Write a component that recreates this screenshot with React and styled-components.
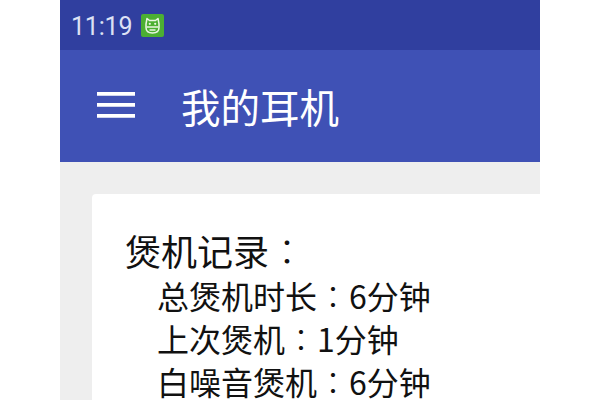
import React from "react";
import styled, { createGlobalStyle } from "styled-components";

const Global = createGlobalStyle`
  html, body { margin: 0; padding: 0; background: #fff; }
  body { width: 600px; height: 400px; overflow: hidden; font-family: "Noto Sans CJK SC", "Noto Sans", sans-serif; }
`;

const Phone = styled.div`
  width: 480px;
  height: 400px;
  margin-left: 60px;
  background: #eeeeee;
  overflow: hidden;
`;

const StatusBar = styled.div`
  height: 50px;
  background: #303f9f;
  display: flex;
  align-items: center;
  padding-left: 11px;
  gap: 10px;
`;

const Clock = styled.span`
  font-family: "Roboto", sans-serif;
  font-size: 25px;
  line-height: 50px;
  color: #dde1f4;
  padding-top: 3px;
  letter-spacing: -0.2px;
`;

const Toolbar = styled.header`
  height: 112px;
  background: #3f51b5;
  display: flex;
  align-items: center;
  padding-left: 37px;
  gap: 46px;
`;

const Title = styled.h1`
  margin: 0;
  font-size: 39.5px;
  font-weight: 400;
  line-height: 56px;
  color: #fff;
`;

const Content = styled.main`
  padding: 32px 0 0 32px;
`;

const Card = styled.section`
  background: #fff;
  border-radius: 4px 0 0 0;
  padding: 33px 0 0 33px;
  height: 300px;
`;

const Heading = styled.div`
  font-size: 36px;
  line-height: 47px;
  color: #111;
`;

const Row = styled.div`
  font-size: 32px;
  line-height: 43px;
  color: #111;
  padding-left: 32px;
  white-space: nowrap;
`;

const Colon = styled.span`
  font-family: "Noto Sans CJK TC", sans-serif;
  font-weight: 300;
`;

const BadgeSvg = styled.svg`
  display: block;
  width: 23px;
  height: 23px;
  margin-left: -1px;
`;

const MenuSvg = styled.svg`
  display: block;
  width: 38px;
  height: 28px;
`;

const AppBadge = () => (
  <BadgeSvg viewBox="0 0 23 23">
    <rect width="23" height="23" rx="2" fill="#4caf32" />
    <path d="M6 4.500 L8.500 6.500 H14.500 L17 4.500 L18 10 V13.500 C18 17 15.500 19 11.500 19 C7.500 19 5 17 5 13.500 V10 Z" fill="none" stroke="#eaf6e2" strokeWidth="1.500" strokeLinejoin="round" />
    <path d="M5.500 13 H17.500 M8.500 16 H14.500" stroke="#eaf6e2" strokeWidth="1.300" />
    <circle cx="8.800" cy="9.800" r="1.100" fill="#eaf6e2" />
    <circle cx="14.200" cy="9.800" r="1.100" fill="#eaf6e2" />
  </BadgeSvg>
);

const MenuIcon = () => (
  <MenuSvg viewBox="0 0 38 28">
    <path d="M0 0h38v3.800H0zM0 11h38v3.800H0zM0 22h38v3.800H0z" fill="#fff" />
  </MenuSvg>
);

export default function App() {
  return (
    <>
      <Global />
      <Phone>
        <StatusBar>
          <Clock>11:19</Clock>
          <AppBadge />
        </StatusBar>
        <Toolbar>
          <MenuIcon />
          <Title>我的耳机</Title>
        </Toolbar>
        <Content>
          <Card>
            <Heading>煲机记录<Colon>：</Colon></Heading>
            <Row>总煲机时长<Colon>：</Colon>6分钟</Row>
            <Row>上次煲机<Colon>：</Colon>1分钟</Row>
            <Row>白噪音煲机<Colon>：</Colon>6分钟</Row>
          </Card>
        </Content>
      </Phone>
    </>
  );
}
